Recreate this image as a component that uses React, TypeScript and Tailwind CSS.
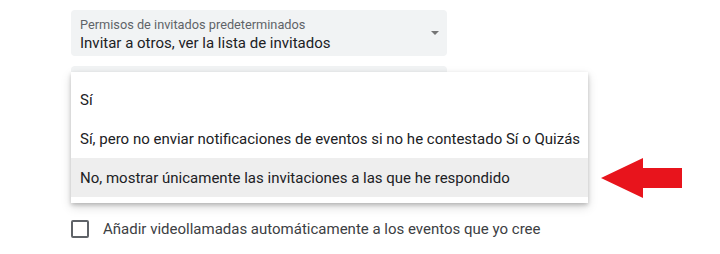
const items = [
  "Sí",
  "Sí, pero no enviar notificaciones de eventos si no he contestado Sí o Quizás",
  "No, mostrar únicamente las invitaciones a las que he respondido",
];

function RedArrow() {
  return (
    <svg width="82" height="42" viewBox="0 0 82 42" className="absolute left-[601px] top-[157px]">
      <polygon points="0,21 42,1 42,11 81,11 81,31 42,31 42,41" fill="#e8141c" />
    </svg>
  );
}

export default function App() {
  return (
    <div
      className="relative w-[720px] h-[254px] bg-white overflow-hidden"
      style={{ fontFamily: "Roboto, 'Liberation Sans', sans-serif" }}
    >
      <div className="flex flex-col pl-[71px] pt-[10px] w-[447px]">
        <div className="flex items-center h-[46px] rounded-[4px] bg-[#f1f3f4] pl-[9px] pr-[8px] pt-[3px]">
          <div className="flex-1">
            <div className="text-[12.75px] leading-[16px] text-[#5f6368]">Permisos de invitados predeterminados</div>
            <div className="text-[15px] leading-[20px] text-[#202124]">Invitar a otros, ver la lista de invitados</div>
          </div>
          <div className="w-0 h-0 mb-[4px] border-l-[4px] border-r-[4px] border-t-[4px] border-l-transparent border-r-transparent border-t-[#757575]" />
        </div>
        <div className="mt-[10px] h-[46px] rounded-[4px] bg-[#f1f3f4]" />
        <label className="mt-[106px] flex items-center gap-[14px]">
          <span className="block shrink-0 w-[18px] h-[18px] border-2 border-[#5f6368] rounded-[2px]" />
          <span className="whitespace-nowrap text-[15px] text-[#3c4043]">Añadir videollamadas automáticamente a los eventos que yo cree</span>
        </label>
      </div>

      <div className="absolute left-[71px] top-[72px] w-[517px] bg-white pt-[8px] pb-[6px] shadow-[0_2px_4px_rgba(0,0,0,0.2),0_4px_10px_rgba(0,0,0,0.15)]">
        {items.map((t, i) => (
          <div
            key={t}
            className={`h-[39px] flex items-center pl-[9px] pt-[1px] text-[15px] text-[#202124] ${i === 2 ? "bg-[#eeeeee]" : ""}`}
          >
            {t}
          </div>
        ))}
      </div>

      <RedArrow />
    </div>
  );
}
